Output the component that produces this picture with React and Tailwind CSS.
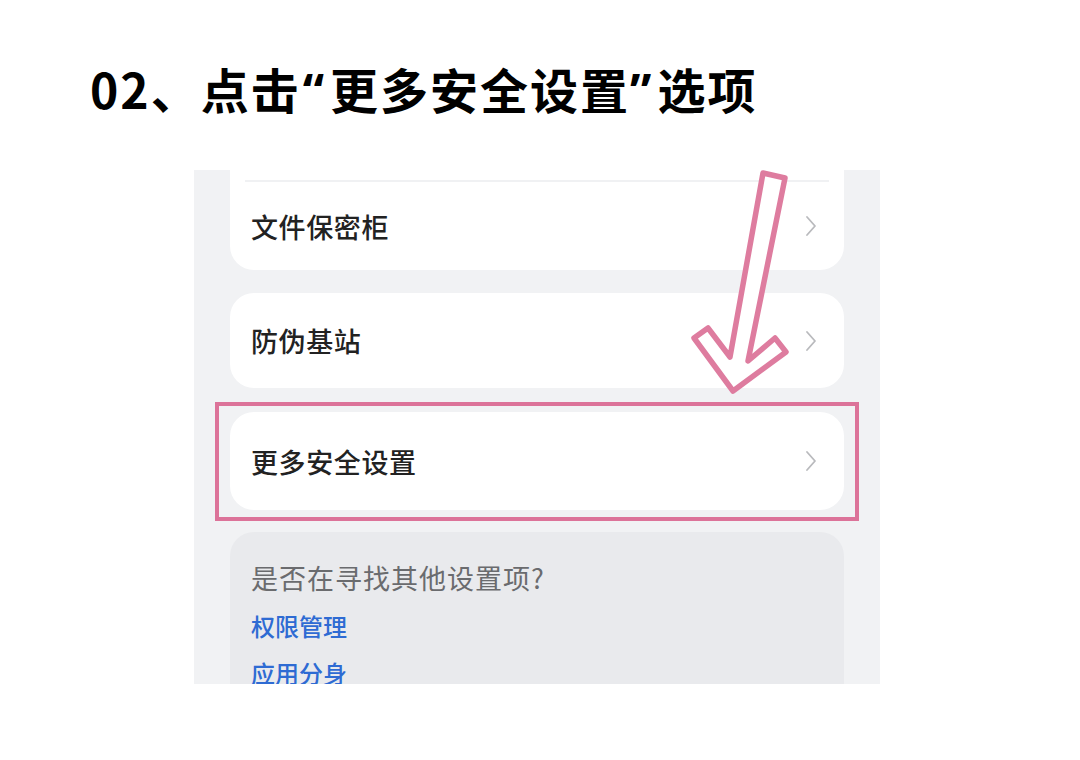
import React from "react";

const FONT = { fontFamily: '"Noto Sans CJK SC", "Noto Sans", sans-serif' };
const LATIN = { fontFamily: '"Noto Sans", "Liberation Sans", sans-serif' };

function Chevron() {
  return (
    <svg width="14" height="24" viewBox="0 0 14 24" className="shrink-0">
      <polyline points="3,3 11,12 3,21" fill="none" stroke="#b9babd" strokeWidth="1.8" strokeLinecap="round" strokeLinejoin="round" />
    </svg>
  );
}

function Card({ label, className }) {
  return (
    <div className={"bg-white flex items-center justify-between pl-[21px] pr-[26px] " + className}>
      <span className="text-[27px] text-[#222] font-medium leading-none tracking-[0.6px]">{label}</span>
      <Chevron />
    </div>
  );
}

export default function App() {
  return (
    <div className="relative w-[1080px] h-[760px] bg-white overflow-hidden" style={FONT}>
      <h1 className="h-[120px] pl-[90px] pt-[56px] text-[48px] leading-[64px] font-bold text-black tracking-[2px] whitespace-nowrap">
        02、点击<span style={LATIN} className="ml-[2px] mr-[4px]">“</span>更多安全设置<span style={LATIN} className="mr-[4px]">”</span>选项
      </h1>
      <div className="relative ml-[194px] mt-[50px] w-[686px] h-[514px] overflow-hidden bg-[#f1f2f4]">
        <div className="flex flex-col px-[36px]">
          <div className="bg-white h-[100px] rounded-b-[24px] flex flex-col">
            <div className="h-[10px]" />
            <div className="mx-[15px] h-[2px] bg-[#f0f1f3]" />
            <div className="flex-1 flex items-center justify-between pl-[21px] pr-[26px]">
              <span className="text-[27px] text-[#222] font-medium leading-none tracking-[0.6px]">文件保密柜</span>
              <Chevron />
            </div>
          </div>
          <Card label="防伪基站" className="mt-[23px] h-[95px] rounded-[24px]" />
          <Card label="更多安全设置" className="mt-[24px] h-[98px] rounded-[24px]" />
          <div className="mt-[22px] h-[200px] rounded-[24px] bg-[#e9eaed] pl-[21px] pt-[29px] flex flex-col">
            <span className="text-[27px] text-[#6a6b6e] leading-[34px] tracking-[1px]">是否在寻找其他设置项?</span>
            <span className="mt-[15px] text-[24px] text-[#2e6bd3] font-medium leading-[32px]">权限管理</span>
            <span className="mt-[15px] text-[24px] text-[#2e6bd3] font-medium leading-[32px]">应用分身</span>
          </div>
        </div>
        <div className="absolute left-[21px] top-[232px] w-[644px] h-[119px] border-[4px] border-[#dc7399]" />
      </div>
      <svg className="absolute left-0 top-0 pointer-events-none" width="1080" height="760">
        <polygon
          points="763,173 785,178 748,361 775,338 786,352 733,391 694,338 708,328 730,357"
          fill="white"
          stroke="#de7c9f"
          strokeWidth="5.5"
          strokeLinejoin="round"
        />
      </svg>
    </div>
  );
}
